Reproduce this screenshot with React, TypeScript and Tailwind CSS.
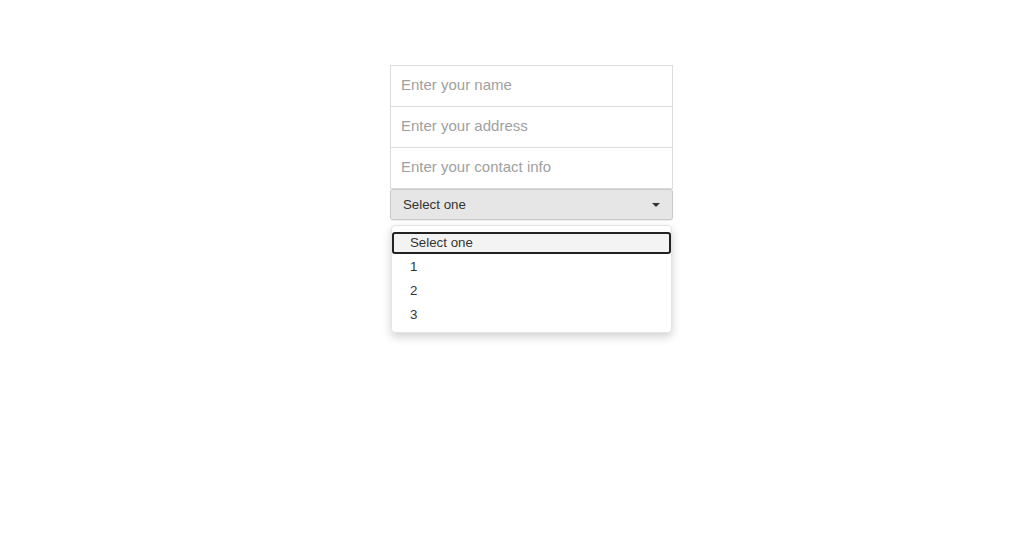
import React from 'react';

const fields = ['Enter your name', 'Enter your address', 'Enter your contact info'];
const options = ['Select one', '1', '2', '3'];

const App: React.FC = () => {
  return (
    <main className="min-h-screen w-full bg-white pt-[65px] pl-[390px] font-['Liberation_Sans',Arial,sans-serif]">
      <div className="w-[283px] flex flex-col">
        {/* text inputs */}
        {fields.map((placeholder, i) => (
          <input
            key={i}
            type="text"
            placeholder={placeholder}
            className={`h-[42px] w-full border border-[#dcdcdc] bg-white px-[10px] pb-[3px] text-[15px] text-[#333] placeholder:text-[#a0a0a0] outline-none ${i > 0 ? '-mt-px' : ''}`}
          />
        ))}

        {/* select box */}
        <div className="h-[31px] w-full flex items-center justify-between rounded-[3px] border border-[#c9c9c9] bg-[#e6e6e6] pl-[12px] pr-[12px] text-[13.3px] text-[#333] shadow-[0_1px_1px_rgba(0,0,0,0.08)]">
          <span>Select one</span>
          <svg width="8" height="4" viewBox="0 0 8 4" className="mt-px">
            <path d="M0 0h8L4 4z" fill="#333" />
          </svg>
        </div>

        {/* open option list */}
        <ul className="mt-[5px] ml-px w-[281px] rounded-[4px] border border-[#e4e4e4] bg-white py-[5px] text-[13.3px] text-[#333] shadow-[0_4px_10px_rgba(0,0,0,0.18)]">
          {options.map((opt, i) => (
            <li key={i} className="h-[24px] flex">
              {i === 0 ? (
                <div className="my-px flex w-full items-center rounded-[3px] border-2 border-[#222] bg-[#f3f3f3] pl-[16px]">
                  {opt}
                </div>
              ) : (
                <div className="flex w-full items-center pl-[18px]">{opt}</div>
              )}
            </li>
          ))}
        </ul>
      </div>
    </main>
  );
};

export default App;
